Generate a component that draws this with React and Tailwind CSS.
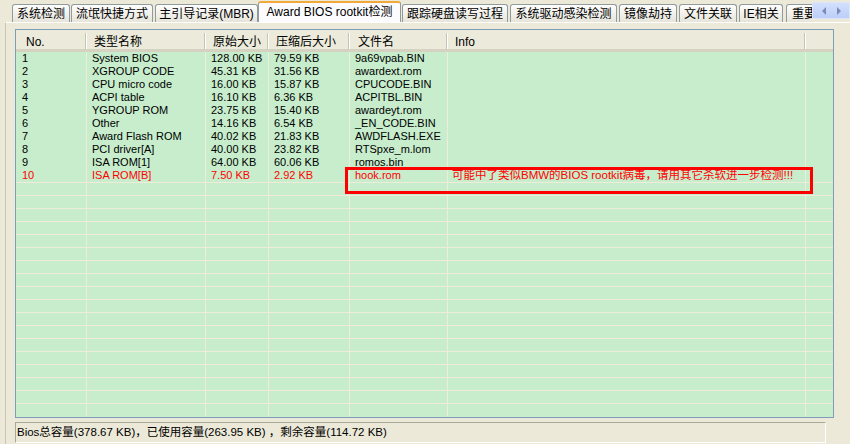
import React from "react";

const tabs = [
  { label: "系统检测", cls: "ml-[12px] w-[58px]" },
  { label: "流氓快捷方式", cls: "ml-[1px] w-[82px]" },
  { label: "主引导记录(MBR)", cls: "ml-[2px] w-[103px]" },
  { label: "Award BIOS rootkit检测", cls: "ml-0 w-[143px]", active: true },
  { label: "跟踪硬盘读写过程", cls: "ml-[1px] w-[106px]" },
  { label: "系统驱动感染检测", cls: "ml-[2px] w-[107px]" },
  { label: "镜像劫持", cls: "ml-[2px] w-[58px]" },
  { label: "文件关联", cls: "ml-[2px] w-[58px]" },
  { label: "IE相关", cls: "ml-[2px] w-[44px]" },
  { label: "重要文件检测", cls: "ml-[3px] w-[84px]" },
];

const columns = [
  { title: "No.", w: "w-[71px]", hp: "pl-[10px]" },
  { title: "类型名称", w: "w-[119px]", hp: "pl-[7px]" },
  { title: "原始大小", w: "w-[63px]", hp: "pl-[7px]" },
  { title: "压缩后大小", w: "w-[81px]", hp: "pl-[7px]" },
  { title: "文件名", w: "w-[98px]", hp: "pl-[8px]" },
  { title: "Info", w: "w-[358px]", hp: "pl-[7px]" },
];

const rows = [
  ["1", "System BIOS", "128.00 KB", "79.59 KB", "9a69vpab.BIN", ""],
  ["2", "XGROUP CODE", "45.31 KB", "31.56 KB", "awardext.rom", ""],
  ["3", "CPU micro code", "16.00 KB", "15.87 KB", "CPUCODE.BIN", ""],
  ["4", "ACPI table", "16.10 KB", "6.36 KB", "ACPITBL.BIN", ""],
  ["5", "YGROUP ROM", "23.75 KB", "15.40 KB", "awardeyt.rom", ""],
  ["6", "Other", "14.16 KB", "6.54 KB", "_EN_CODE.BIN", ""],
  ["7", "Award Flash ROM", "40.02 KB", "21.83 KB", "AWDFLASH.EXE", ""],
  ["8", "PCI driver[A]", "40.00 KB", "23.82 KB", "RTSpxe_m.lom", ""],
  ["9", "ISA ROM[1]", "64.00 KB", "60.06 KB", "romos.bin", ""],
  ["10", "ISA ROM[B]", "7.50 KB", "2.92 KB", "hook.rom", "可能中了类似BMW的BIOS rootkit病毒，请用其它杀软进一步检测!!!"],
];

export default function App() {
  return (
    <div className="w-[850px] h-[444px] overflow-hidden bg-[#ECE9D8] font-['Liberation_Sans','Noto_Sans_CJK_SC',sans-serif] text-black select-none">
      {/* Tab strip */}
      <div className="flex h-[22px] items-end">
        <div className="flex flex-1 items-end overflow-hidden h-[22px]">
          {tabs.map((t) => (
            <div
              key={t.label}
              className={`${t.cls} shrink-0 flex justify-center rounded-t-[3px] border-x border-[#919B9C] text-[12px] whitespace-nowrap overflow-hidden ${
                t.active
                  ? "h-[21px] border-t-2 border-t-[#F2A93B] bg-[#FCFCFE] pt-[1px] leading-[16px]"
                  : "h-[18px] border-t border-t-[#919B9C] bg-linear-to-b from-[#FEFEFE] to-[#E6E4DA] pt-[1px] leading-[16px]"
              }`}
            >
              {t.label}
            </div>
          ))}
        </div>
        <div className="w-[38px] h-[17px] mb-[3px] shrink-0 flex items-center justify-around border border-[#DCE6FB] bg-linear-to-b from-[#D3E0FD] to-[#BCCEF8] px-[3px]">
          <svg width="6" height="8" viewBox="0 0 6 8">
            <path d="M5 0 L1 4 L5 8 Z" fill="#7A8DB8" />
          </svg>
          <svg width="6" height="8" viewBox="0 0 6 8">
            <path d="M1 0 L5 4 L1 8 Z" fill="#7A8DB8" />
          </svg>
        </div>
      </div>

      {/* Tab page */}
      <div className="ml-[5px] h-[422px] border-l border-[#C9C6B6] border-t border-t-white pt-[6px] pl-[9px]">
        {/* List view */}
        <div className="relative w-[819px] h-[389px] border border-[#7F9DB9] bg-[#C7EDCC] overflow-hidden">
          {/* Header */}
          <div className="flex h-[22px] bg-[#EBEADB] border-b-[3px] border-[#D6D2C2]">
            {columns.map((c) => (
              <div key={c.title} className={`${c.w} shrink-0 flex justify-between items-start`}>
                <span className={`${c.hp} pt-[5px] text-[12px] leading-[14px] whitespace-nowrap`}>{c.title}</span>
                <span className="mt-[3px] h-[16px] w-[2px] border-l border-[#C7C5B2] border-r border-r-white" />
              </div>
            ))}
            <div className="flex-1" />
          </div>

          {/* Rows */}
          {rows.map((r) => (
            <div
              key={r[0]}
              className={`flex h-[13px] text-[11px] leading-[13px] ${r[0] === "10" ? "text-[#FF0000]" : "text-black"}`}
            >
              {r.map((cell, i) => (
                <div
                  key={i}
                  className={`${columns[i].w} shrink-0 border-r border-[#EFEDD9] whitespace-nowrap overflow-hidden ${
                    i === 0 ? "pl-[6px]" : i === 5 ? "pl-[4px] text-[11.5px]" : "pl-[5px]"
                  }`}
                >
                  {cell}
                </div>
              ))}
              <div className="flex-1" />
            </div>
          ))}

          {/* Empty grid rows */}
          {Array.from({ length: 18 }).map((_, k) => (
            <div key={k} className="flex h-[13px] border-t border-[#EFEDD9]">
              {columns.map((c) => (
                <div key={c.title} className={`${c.w} shrink-0 border-r border-[#EFEDD9]`} />
              ))}
              <div className="flex-1" />
            </div>
          ))}

          {/* Highlight annotation */}
          <div className="absolute left-[329px] top-[137px] w-[468px] h-[27px] border-[3px] border-[#FF0000]" />
        </div>

        {/* Status panel */}
        <div className="mt-[4px] w-[811px] h-[21px] border border-t-[#ACA899] border-l-[#ACA899] border-r-white border-b-white flex items-center pl-[1px] text-[11.5px] whitespace-nowrap">
          Bios总容量(378.67 KB)，已使用容量(263.95 KB) ，剩余容量(114.72 KB)
        </div>
      </div>
    </div>
  );
}
